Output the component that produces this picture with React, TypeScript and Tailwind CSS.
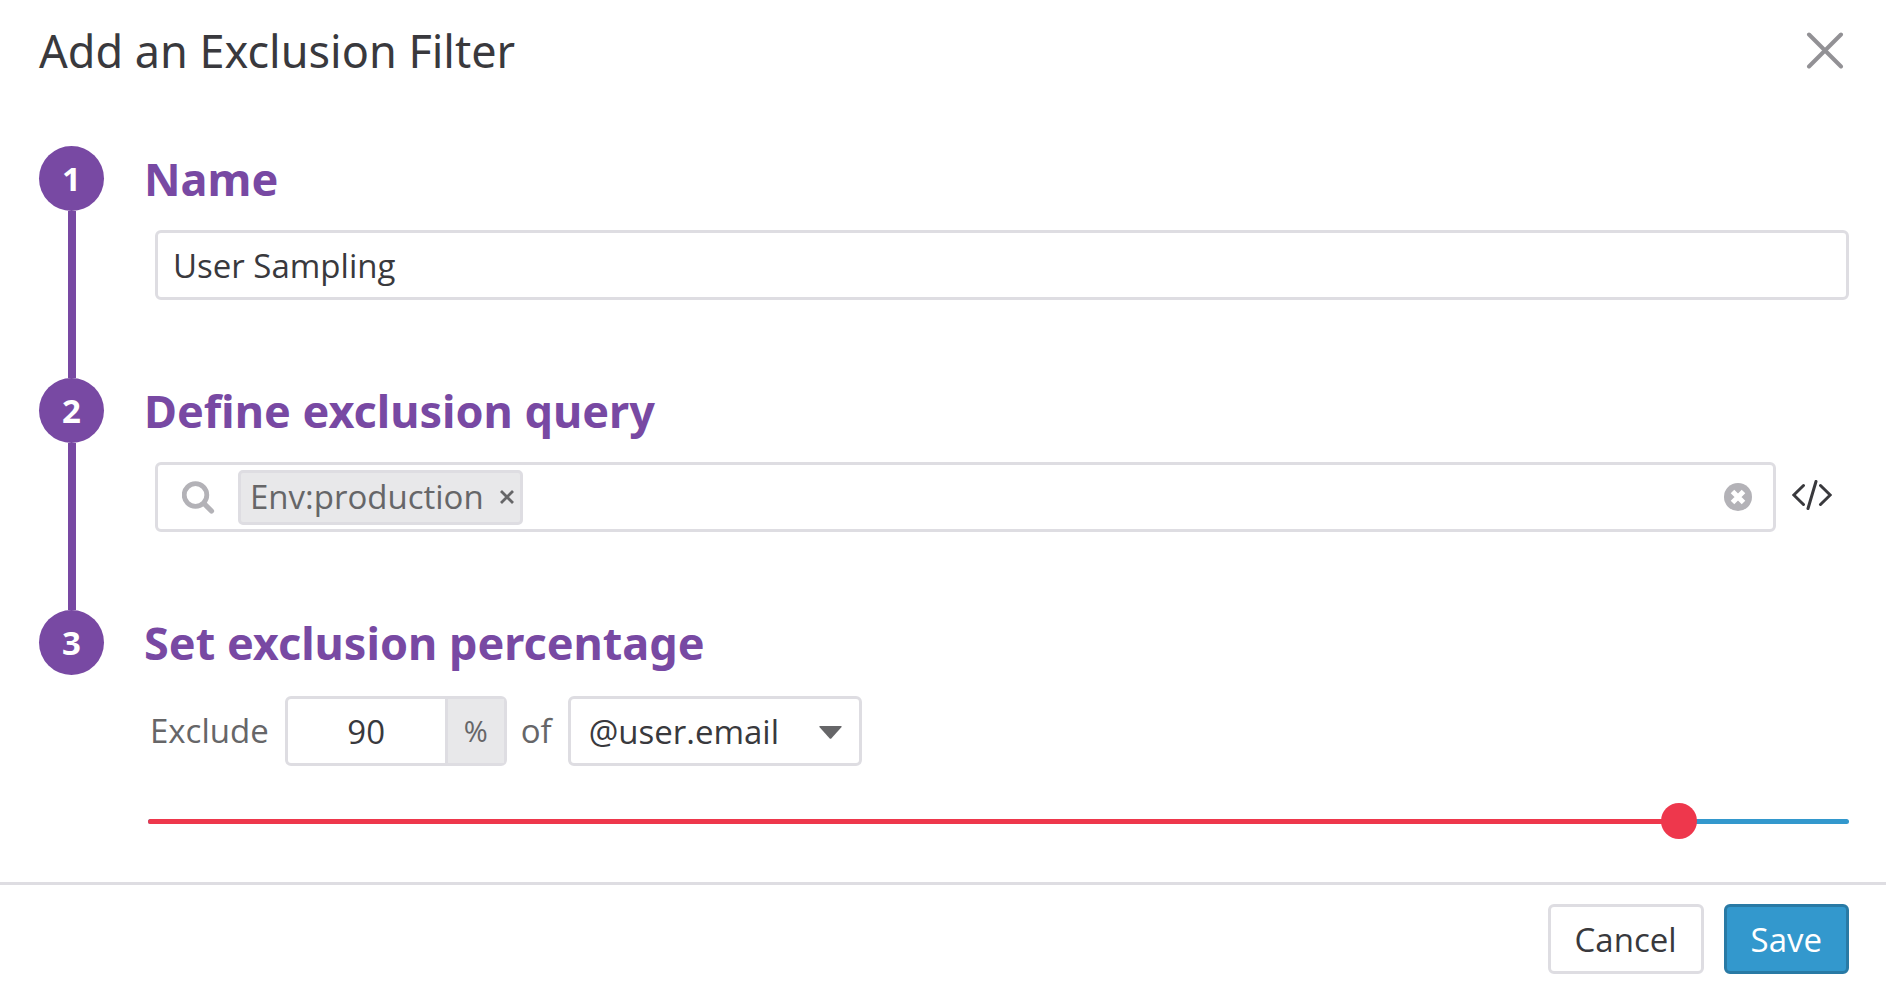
import { useState, type ReactNode } from 'react';

type StepProps = {
  number: number;
  title: string;
  last?: boolean;
  children: ReactNode;
};

function Step({ number, title, last = false, children }: StepProps) {
  return (
    <section className="flex gap-10">
      <div className="flex w-[65px] shrink-0 flex-col items-center">
        <span className="flex size-[65px] shrink-0 items-center justify-center rounded-full bg-[#7849a3] font-['Noto_Sans',sans-serif] text-[33px] leading-none font-bold text-white">
          {number}
        </span>
        {!last && <span className="w-2 grow bg-[#7849a3]" />}
      </div>
      <div className={last ? 'min-w-0 grow' : 'min-w-0 grow pb-[78px]'}>
        <h2 className="flex h-[65px] items-center font-['Noto_Sans',sans-serif] text-[45px] leading-none font-bold whitespace-nowrap text-[#7849a3]">
          {title}
        </h2>
        {children}
      </div>
    </section>
  );
}

function CloseIcon() {
  return (
    <svg viewBox="0 0 38 38" className="size-[38px]" fill="none" stroke="#929195" strokeWidth="4" strokeLinecap="round" aria-hidden="true">
      <path d="M3 2.5 35 34.5M35 2.5 3 34.5" />
    </svg>
  );
}

function SearchIcon() {
  return (
    <svg viewBox="0 0 33 33" className="size-[33px] shrink-0" fill="none" stroke="#b3b2b7" aria-hidden="true">
      <circle cx="13.5" cy="14" r="11.3" strokeWidth="4.8" />
      <path d="M22 22.5 29.5 30" strokeWidth="5.2" strokeLinecap="round" />
    </svg>
  );
}

function ClearIcon() {
  return (
    <svg viewBox="0 0 28 28" className="size-7" aria-hidden="true">
      <circle cx="14" cy="14" r="14" fill="#b3b2b7" />
      <path d="M8.5 8.5 19.5 19.5M19.5 8.5 8.5 19.5" stroke="#fff" strokeWidth="5" />
    </svg>
  );
}

function CodeIcon() {
  return (
    <svg viewBox="0 0 40 30" className="h-[30px] w-10" fill="none" stroke="#39393d" strokeWidth="3" strokeLinecap="round" aria-hidden="true">
      <path d="M11.5 5.5 1.8 15 11.5 24.5M28.5 5.5 38.2 15 28.5 24.5" />
      <path d="M24 1.5 16 28.5" />
    </svg>
  );
}

export default function App() {
  const [name, setName] = useState('User Sampling');
  const [tags, setTags] = useState(['Env:production']);
  const [query, setQuery] = useState('');
  const [percent, setPercent] = useState(90);

  return (
    <main className="flex min-h-screen flex-col bg-white font-['Open_Sans','Noto_Sans',sans-serif] text-[33px] leading-[44px] text-[#39393d]">
      <header className="flex items-center justify-between pt-5 pr-[42px] pl-[39px]">
        <h1 className="font-['Noto_Sans',sans-serif] text-[45px] leading-[62px]">Add an Exclusion Filter</h1>
        <button type="button" aria-label="Close">
          <CloseIcon />
        </button>
      </header>

      <form className="grow pt-16 pr-[37px] pl-[39px]" onSubmit={(e) => e.preventDefault()}>
        <Step number={1} title="Name">
          <div className="mt-[19px] ml-[11px]">
            <input
              type="text"
              aria-label="Name"
              value={name}
              onChange={(e) => setName(e.target.value)}
              className="block h-[70px] w-full rounded-md border-3 border-[#dedde2] px-[15px] outline-none"
            />
          </div>
        </Step>

        <Step number={2} title="Define exclusion query">
          <div className="mt-[19px] ml-[11px] flex items-center">
            <div className="flex h-[70px] min-w-0 grow items-center rounded-md border-3 border-[#dedde2] pr-[21px] pl-6">
              <SearchIcon />
              {tags.map((tag) => (
                <span
                  key={tag}
                  className="ml-[23px] flex h-[55px] shrink-0 items-center gap-3.5 rounded-[5px] border-3 border-[#dedde2] bg-[#e8e8ea] pr-1 pl-[9px] text-[#666668]"
                >
                  {tag}
                  <button type="button" aria-label={`Remove ${tag}`} onClick={() => setTags([])}>
                    <svg viewBox="0 0 18 18" className="size-[18px]" stroke="#666668" strokeWidth="2.8" aria-hidden="true">
                      <path d="M3 3 15 15M15 3 3 15" />
                    </svg>
                  </button>
                </span>
              ))}
              <input
                type="text"
                aria-label="Exclusion query"
                value={query}
                onChange={(e) => setQuery(e.target.value)}
                className="min-w-0 grow px-4 outline-none"
              />
              <button type="button" aria-label="Clear query" onClick={() => setTags([])}>
                <ClearIcon />
              </button>
            </div>
            <button type="button" aria-label="Edit as code" className="mr-[17px] ml-4 pb-1">
              <CodeIcon />
            </button>
          </div>
        </Step>

        <Step number={3} title="Set exclusion percentage" last>
          <div className="mt-[21px] ml-1.5 flex items-center text-[#666668]">
            <label htmlFor="percent">Exclude</label>
            <div className="ml-4 flex h-[70px] w-[222px] rounded-md border-3 border-[#dedde2]">
              <input
                id="percent"
                type="text"
                inputMode="numeric"
                value={percent}
                onChange={(e) => setPercent(Math.min(100, Number(e.target.value) || 0))}
                className="min-w-0 grow pt-px text-center text-[#39393d] outline-none"
              />
              <span className="flex w-[59px] shrink-0 items-center justify-center border-l-3 border-[#dedde2] bg-[#e8e8ea] text-[29px]">
                %
              </span>
            </div>
            <label htmlFor="field" className="mr-4 ml-3.5">
              of
            </label>
            <div className="relative">
              <select
                id="field"
                className="block h-[70px] w-[294px] appearance-none rounded-md border-3 border-[#dedde2] bg-white pt-px pl-[18px] text-[#39393d] outline-none"
              >
                <option>@user.email</option>
              </select>
              <svg viewBox="0 0 23 13" className="pointer-events-none absolute top-[30px] right-5 h-[13px] w-[23px]" fill="#666668" aria-hidden="true">
                <path d="M1 0H22Q23 0 22.6 1L12.3 12.4Q11.5 13 10.7 12.4L.4 1Q0 0 1 0Z" />
              </svg>
            </div>
          </div>

          <div className="relative mt-[37px] ml-1 flex h-9 items-center">
            <div className="h-[5px] grow overflow-hidden rounded-sm bg-[#3398cd]">
              <div className="h-full bg-[#ee374c]" style={{ width: `${percent}%` }} />
            </div>
            <input
              type="range"
              aria-label="Exclusion percentage"
              min={0}
              max={100}
              value={percent}
              onChange={(e) => setPercent(Number(e.target.value))}
              className="absolute inset-y-0 -inset-x-[18px] appearance-none bg-transparent outline-none [&::-webkit-slider-thumb]:size-9 [&::-webkit-slider-thumb]:appearance-none [&::-webkit-slider-thumb]:rounded-full [&::-webkit-slider-thumb]:bg-[#ee374c]"
            />
          </div>
        </Step>
      </form>

      <footer className="flex justify-end gap-5 border-t-3 border-[#dedde2] pt-[19px] pr-[37px] pb-[15px]">
        <button type="button" className="h-[70px] rounded-md border-3 border-[#dedde2] bg-white px-6 pt-0.5">
          Cancel
        </button>
        <button type="submit" className="h-[70px] rounded-md border-3 border-[#297aa5] bg-[#3398cd] px-6 pt-0.5 text-white">
          Save
        </button>
      </footer>
    </main>
  );
}
